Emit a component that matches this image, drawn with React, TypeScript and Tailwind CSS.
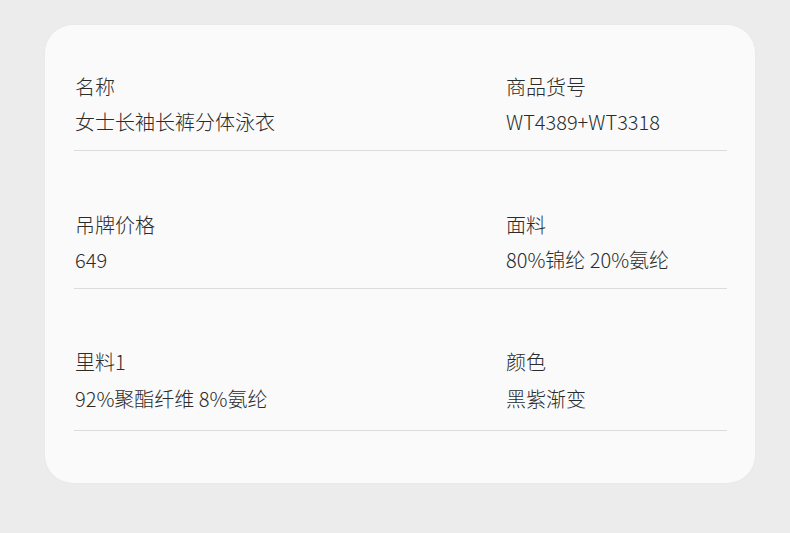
import React from 'react';

type Row = { items: { label: string; value: string }[]; last?: boolean };

const rows: Row[] = [
  {
    items: [
      { label: '名称', value: '女士长袖长裤分体泳衣' },
      { label: '商品货号', value: 'WT4389+WT3318' },
    ],
  },
  {
    items: [
      { label: '吊牌价格', value: '649' },
      { label: '面料', value: '80%锦纶 20%氨纶' },
    ],
  },
  {
    items: [
      { label: '里料1', value: '92%聚酯纤维 8%氨纶' },
      { label: '颜色', value: '黑紫渐变' },
    ],
    last: true,
  },
];

export default function App() {
  return (
    <div
      className="w-[790px] h-[533px] bg-[#ececec] pt-[25px] pl-[45px]"
      style={{ fontFamily: '"Noto Sans CJK SC", "Noto Sans", sans-serif' }}
    >
      <div className="w-[710px] h-[458px] bg-[#fafafa] rounded-[28px] shadow-[0_0_3px_rgba(0,0,0,0.03)] pl-[29px] pr-[28px] pt-[49px]">
        {rows.map((row, i) => (
          <div
            key={i}
            className={`grid grid-cols-[432px_1fr] border-b border-[#dcdcdc] ${i === 1 ? 'pt-[61px]' : ''} ${i === 2 ? 'pt-[60px]' : ''} ${row.last ? 'pb-[18px]' : 'pb-[15px]'}`}
          >
            {row.items.map((it, j) => (
              <div
                key={it.label}
                className={`flex flex-col text-[20px] leading-[26px] text-[#2b2b2b] font-light ${j === 0 ? 'pl-px' : ''}`}
              >
                <div>{it.label}</div>
                <div className={row.last ? 'mt-[11px]' : 'mt-[9px]'}>{it.value}</div>
              </div>
            ))}
          </div>
        ))}
      </div>
    </div>
  );
}
